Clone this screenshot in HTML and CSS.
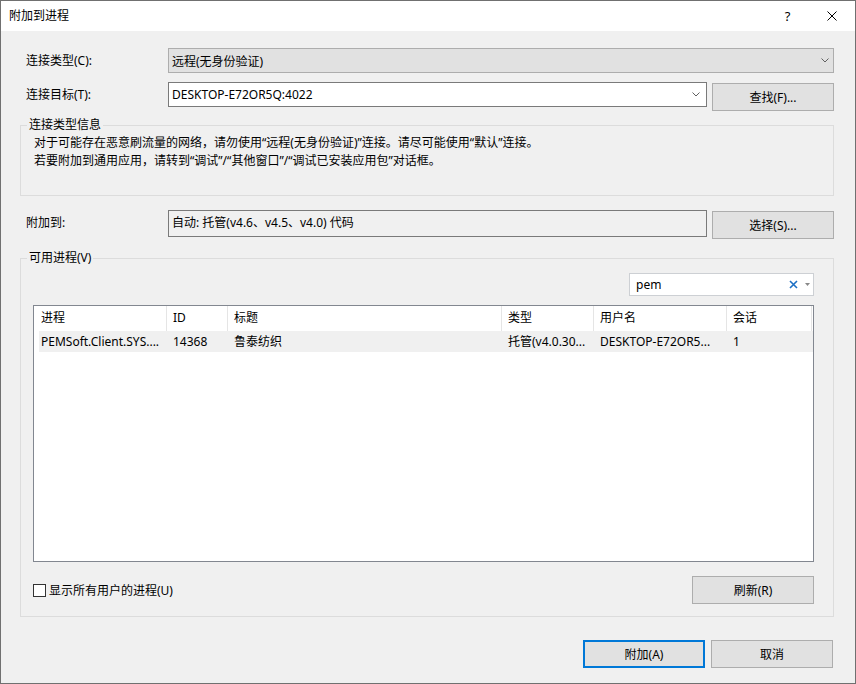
FILE: index.html
```html
<!DOCTYPE html>
<html lang="zh-CN">
  <head>
    <meta charset="UTF-8" />
    <meta name="viewport" content="width=device-width, initial-scale=1.0" />
    <title>附加到进程</title>
    <link rel="stylesheet" href="styles.css">
  </head>
  <body>
    <div class="dialog">
      <div class="titlebar">
        <span class="title">附加到进程</span>
        <div class="caption-buttons">
          <span class="caption-btn help">?</span>
          <span class="caption-btn close">
            <svg width="10" height="10" viewBox="0 0 10 10">
              <path d="M0.5 0.5 L9.5 9.5 M9.5 0.5 L0.5 9.5" stroke="#000" stroke-width="1" fill="none" />
            </svg>
          </span>
        </div>
      </div>

      <div class="content">
        <div class="field-row">
          <label class="field-label">连接类型(C):</label>
          <div class="combo combo-readonly">
            <span class="combo-text">远程(无身份验证)</span>
            <svg class="chevron" width="8" height="5" viewBox="0 0 8 5">
              <path d="M0.5 0.5 L4 4 L7.5 0.5" stroke="#606060" fill="none" />
            </svg>
          </div>
        </div>

        <div class="field-row row-target">
          <label class="field-label">连接目标(T):</label>
          <div class="combo combo-edit">
            <span class="combo-text">DESKTOP-E72OR5Q:4022</span>
            <svg class="chevron" width="8" height="5" viewBox="0 0 8 5">
              <path d="M0.5 0.5 L4 4 L7.5 0.5" stroke="#606060" fill="none" />
            </svg>
          </div>
          <button class="btn">查找(F)...</button>
        </div>

        <fieldset class="group group-info">
          <legend>连接类型信息</legend>
          <p class="info-text">
            对于可能存在恶意刷流量的网络，请勿使用“远程(无身份验证)”连接。请尽可能使用“默认”连接。<br />
            若要附加到通用应用，请转到“调试”/“其他窗口”/“调试已安装应用包”对话框。
          </p>
        </fieldset>

        <div class="field-row row-attach">
          <label class="field-label">附加到:</label>
          <div class="readonly-box">自动: 托管(v4.6、v4.5、v4.0) 代码</div>
          <button class="btn">选择(S)...</button>
        </div>

        <fieldset class="group group-proc">
          <legend>可用进程(V)</legend>
          <div class="search-row">
            <div class="search">
              <span class="search-text">pem</span>
              <span class="search-clear">
                <svg width="9" height="9" viewBox="0 0 9 9">
                  <path d="M1 1 L8 8 M8 1 L1 8" stroke="#1c6fc4" stroke-width="1.6" fill="none" />
                </svg>
              </span>
              <span class="search-drop">
                <svg width="5" height="3" viewBox="0 0 5 3">
                  <path d="M0 0 L5 0 L2.5 3 Z" fill="#888" />
                </svg>
              </span>
            </div>
          </div>

          <div class="proc-list">
            <div class="list-head">
              <div class="cell c-name">进程</div>
              <div class="cell c-id">ID</div>
              <div class="cell c-title">标题</div>
              <div class="cell c-type">类型</div>
              <div class="cell c-user">用户名</div>
              <div class="cell c-session">会话</div>
            </div>
            <div class="list-row">
              <div class="cell c-name">PEMSoft.Client.SYS....</div>
              <div class="cell c-id">14368</div>
              <div class="cell c-title">鲁泰纺织</div>
              <div class="cell c-type">托管(v4.0.30...</div>
              <div class="cell c-user">DESKTOP-E72OR5...</div>
              <div class="cell c-session">1</div>
            </div>
          </div>

          <div class="proc-footer">
            <label class="check">
              <span class="check-box"></span>
              <span>显示所有用户的进程(U)</span>
            </label>
            <button class="btn">刷新(R)</button>
          </div>
        </fieldset>

        <div class="dialog-buttons">
          <button class="btn btn-default">附加(A)</button>
          <button class="btn">取消</button>
        </div>
      </div>
    </div>
  </body>
</html>
```

FILE: styles.css
```css
* {
  margin: 0;
  padding: 0;
  box-sizing: border-box;
}
body {
  background-color: #f0f0f0;
  font-family: "Noto Sans", "Noto Sans CJK SC", sans-serif;
  font-size: 12px;
  color: #000;
}
.dialog {
  width: 856px;
  height: 684px;
  border: 1px solid #707070;
  background-color: #f0f0f0;
  display: flex;
  flex-direction: column;
}
.titlebar {
  height: 30px;
  background-color: #fff;
  display: flex;
  align-items: center;
  justify-content: space-between;
  padding-left: 8px;
}
.title {
  font-size: 12px;
  line-height: 16px;
}
.caption-buttons {
  display: flex;
  height: 100%;
}
.caption-btn {
  width: 46px;
  height: 100%;
  display: flex;
  align-items: center;
  justify-content: center;
}
.help {
  font-size: 13px;
  padding-bottom: 1px;
  padding-left: 3px;
}
.content {
  padding: 17px 21px 0 19px;
  display: flex;
  flex-direction: column;
}

/* label + control rows */
.field-row {
  display: flex;
  align-items: flex-start;
}
.field-label {
  width: 148px;
  padding-left: 6px;
  line-height: 25px;
}
.row-target {
  margin-top: 9px;
}
.row-attach {
  margin-top: 14px;
}
.row-attach .field-label {
  line-height: 26px;
}
.combo {
  height: 25px;
  display: flex;
  align-items: center;
  justify-content: space-between;
  padding-left: 3px;
}
.combo-readonly {
  flex: 1;
  background-color: #e1e1e1;
  border: 1px solid #adadad;
}
.combo-readonly .chevron {
  margin-right: 4px;
}
.combo-edit {
  width: 539px;
  background-color: #fff;
  border: 1px solid #7a7a7a;
}
.combo-edit .chevron {
  margin-right: 6px;
}
.readonly-box {
  width: 539px;
  height: 27px;
  background-color: #f0f0f0;
  border: 1px solid #7a7a7a;
  padding: 4px 0 0 3px;
  line-height: 16px;
}
.btn {
  width: 122px;
  height: 28px;
  background-color: #e1e1e1;
  border: 1px solid #adadad;
  font-family: inherit;
  font-size: 12px;
  color: #000;
}
.field-row .btn {
  margin-top: 1px;
  margin-left: auto;
}
.btn-default {
  border: 2px solid #0078d7;
}

/* group boxes */
.group {
  border: 1px solid #dcdcdc;
  padding: 0 19px 0 12px;
  min-width: 0;
}
.group legend {
  margin-left: -6px;
  padding: 0 2px;
  line-height: 16px;
}
.group-info {
  margin-top: 6px;
  padding-bottom: 25px;
}
.info-text {
  margin-top: 1px;
  padding-left: 1px;
  line-height: 18px;
}
.group-proc {
  margin-top: 11px;
  padding-bottom: 12px;
}
.search-row {
  display: flex;
  justify-content: flex-end;
  margin-top: 7px;
}
.search {
  width: 185px;
  height: 23px;
  background-color: #fff;
  border: 1px solid #cdd0d4;
  display: flex;
  align-items: center;
  padding-left: 6px;
}
.search-text {
  flex: 1;
}
.search-clear {
  display: flex;
  margin-right: 7px;
}
.search-drop {
  display: flex;
  margin-right: 3px;
}

/* process list */
.proc-list {
  margin-top: 9px;
  height: 257px;
  background-color: #fff;
  border: 1px solid #828790;
  padding-left: 5px;
}
.list-head,
.list-row {
  display: grid;
  grid-template-columns: 128px 61px 274px 92px 133px 85px;
}
.list-head {
  height: 25px;
}
.list-head .cell {
  border-right: 1px solid #e5e5e5;
  line-height: 24px;
}
.list-row {
  height: 21px;
  background-color: #f0f0f0;
}
.list-row .cell {
  line-height: 21px;
}
.cell {
  padding-left: 6px;
  white-space: nowrap;
  overflow: hidden;
}
.cell.c-name {
  padding-left: 2px;
}
.proc-footer {
  margin-top: 14px;
  display: flex;
  align-items: center;
  justify-content: space-between;
}
.check {
  display: flex;
  align-items: center;
  gap: 3px;
}
.check-box {
  width: 13px;
  height: 13px;
  border: 1px solid #333;
  background-color: #fff;
}

/* bottom buttons */
.dialog-buttons {
  margin-top: 23px;
  display: flex;
  justify-content: flex-end;
  gap: 6px;
  padding-right: 1px;
}
```
